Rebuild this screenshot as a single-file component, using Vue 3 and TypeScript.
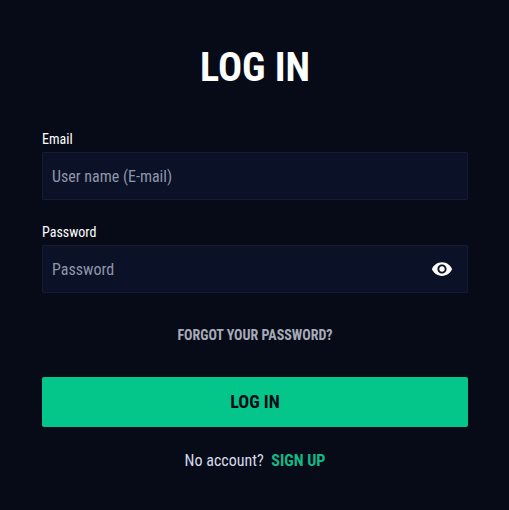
<script setup lang="ts">
import { ref } from 'vue'

const email = ref('')
const password = ref('')
</script>

<template>
  <main class="page">
    <h1 class="title">LOG IN</h1>
    <form class="form" @submit.prevent>
      <label class="field">
        <span class="label">Email</span>
        <span class="control">
          <input v-model="email" class="input" type="text" placeholder="User name (E-mail)" />
        </span>
      </label>
      <label class="field">
        <span class="label">Password</span>
        <span class="control">
          <input v-model="password" class="input" type="password" placeholder="Password" />
          <svg class="eye" viewBox="0 0 24 24" aria-hidden="true">
            <path
              fill="#fff"
              d="M12 4.5C7 4.5 2.73 7.61 1 12c1.73 4.39 6 7.5 11 7.5s9.27-3.11 11-7.5c-1.73-4.39-6-7.5-11-7.5zM12 17c-2.76 0-5-2.24-5-5s2.24-5 5-5 5 2.24 5 5-2.24 5-5 5zm0-8c-1.66 0-3 1.34-3 3s1.34 3 3 3 3-1.34 3-3-1.34-3-3-3z"
            />
          </svg>
        </span>
      </label>
      <a class="forgot" href="#">FORGOT YOUR PASSWORD?</a>
      <button class="submit" type="submit">LOG IN</button>
      <p class="signup">No account? <a class="signup-link" href="#">SIGN UP</a></p>
    </form>
  </main>
</template>

<style>
html,
body {
  margin: 0;
  background: #070b18;
}
</style>

<style scoped>
.page {
  box-sizing: border-box;
  width: 509px;
  height: 510px;
  padding: 42px 41px 0 42px;
  background: #070b18;
  font-family: Roboto, "Liberation Sans", sans-serif;
  font-stretch: 75%;
  color: #fff;
}
.title {
  margin: 0 0 38px;
  height: 52px;
  line-height: 52px;
  font-size: 40px;
  font-weight: 700;
  text-align: center;
}
.form {
  display: flex;
  flex-direction: column;
}
.field {
  display: flex;
  flex-direction: column;
  margin-bottom: 25px;
}
.label {
  height: 20px;
  line-height: 14px;
  font-size: 14px;
  font-weight: 400;
}
.control {
  box-sizing: border-box;
  display: flex;
  align-items: center;
  height: 48px;
  padding: 0 14px 0 9px;
  background: #0b1126;
  border: 1px solid #141b38;
  border-radius: 1px;
}
.input {
  flex: 1;
  min-width: 0;
  padding: 0;
  border: 0;
  outline: 0;
  background: transparent;
  color: #fff;
  font: inherit;
  font-size: 16px;
}
.input::placeholder {
  color: #8f96ac;
  opacity: 1;
}
.eye {
  width: 22px;
  height: 22px;
  flex: none;
}
.forgot {
  margin-top: 9px;
  height: 16px;
  line-height: 16px;
  text-align: center;
  font-size: 14px;
  font-weight: 700;
  color: #a7abb9;
  text-decoration: none;
}
.submit {
  height: 50px;
  margin-top: 34px;
  padding: 0 0 2px;
  border: 0;
  border-radius: 2px;
  background: #05c68a;
  color: #070b18;
  font: inherit;
  font-size: 18px;
  font-weight: 700;
}
.signup {
  margin: 24px 0 0;
  line-height: 20px;
  text-align: center;
  font-size: 16px;
  color: #d5d9ea;
}
.signup-link {
  margin-left: 4px;
  font-weight: 700;
  color: #13b985;
  text-decoration: none;
}
</style>
